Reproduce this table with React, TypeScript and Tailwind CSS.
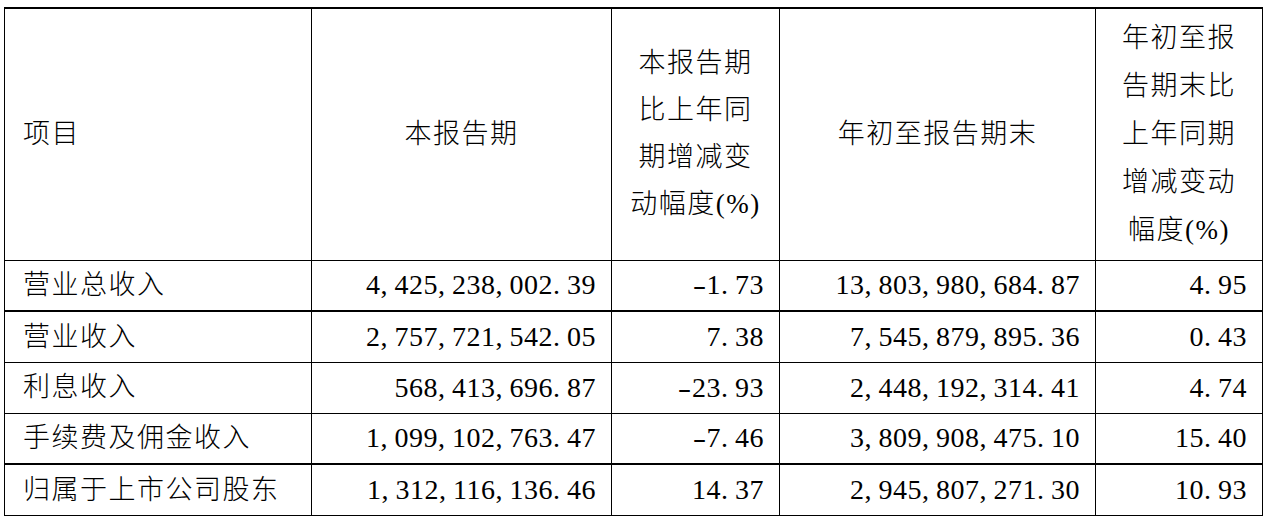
import React from 'react';

type Row = {
  item: string;
  current: string;
  currentChange: string;
  ytd: string;
  ytdChange: string;
  thick: boolean;
};

const rows: Row[] = [
  { item: '营业总收入', current: '4,425,238,002.39', currentChange: '-1.73', ytd: '13,803,980,684.87', ytdChange: '4.95', thick: true },
  { item: '营业收入', current: '2,757,721,542.05', currentChange: '7.38', ytd: '7,545,879,895.36', ytdChange: '0.43', thick: false },
  { item: '利息收入', current: '568,413,696.87', currentChange: '-23.93', ytd: '2,448,192,314.41', ytdChange: '4.74', thick: false },
  { item: '手续费及佣金收入', current: '1,099,102,763.47', currentChange: '-7.46', ytd: '3,809,908,475.10', ytdChange: '15.40', thick: true },
  { item: '归属于上市公司股东', current: '1,312,116,136.46', currentChange: '14.37', ytd: '2,945,807,271.30', ytdChange: '10.93', thick: false },
];

// digits are half-width in the report font, so give punctuation the same cell
const Num = ({ value }: { value: string }) => (
  <>
    {value.split('').map((c, i) =>
      c === ',' || c === '.' ? (
        <span key={i} className="inline-block w-[0.5em] text-left">{c}</span>
      ) : c === '-' ? (
        <span key={i} className="inline-block w-[0.5em] text-center scale-x-[1.45]">{c}</span>
      ) : (
        <React.Fragment key={i}>{c}</React.Fragment>
      )
    )}
  </>
);

const cjk = "tracking-[1.5px]";
const num = "text-[28px] tracking-[0.5px] text-right pr-[15px]";

export default function App() {
  return (
    <div
      className="w-[1270px] h-[525px] bg-white pt-[7px] pl-[4px] text-black text-[27px] font-light"
      style={{ fontFamily: '"Liberation Serif", "Noto Sans CJK SC", serif' }}
    >
      <table className="table-fixed border-collapse w-[1258px]">
        <colgroup>
          <col className="w-[307px]" />
          <col className="w-[300px]" />
          <col className="w-[168px]" />
          <col className="w-[316px]" />
          <col className="w-[167px]" />
        </colgroup>
        <thead>
          <tr className="h-[252px] border-t-2 border-black">
            <th className={`border border-black font-light text-left align-middle pl-[18px] ${cjk}`}>项目</th>
            <th className={`border border-black font-light text-center align-middle ${cjk}`}>本报告期</th>
            <th className={`border border-black font-light text-center align-middle leading-[47px] ${cjk}`}>
              本报告期<br />比上年同<br />期增减变<br />动幅度(%)
            </th>
            <th className={`border border-black font-light text-center align-middle ${cjk}`}>年初至报告期末</th>
            <th className={`border border-black font-light text-center align-middle leading-[48px] ${cjk}`}>
              年初至报<br />告期末比<br />上年同期<br />增减变动<br />幅度(%)
            </th>
          </tr>
        </thead>
        <tbody>
          {rows.map((r) => (
            <tr key={r.item} className={`h-[51px] ${r.thick ? 'border-b-2' : 'border-b'} border-black`}>
              <td className={`border-x border-black pl-[18px] whitespace-nowrap ${cjk}`}>{r.item}</td>
              <td className={`border-x border-black ${num}`}><Num value={r.current} /></td>
              <td className={`border-x border-black ${num}`}><Num value={r.currentChange} /></td>
              <td className={`border-x border-black ${num}`}><Num value={r.ytd} /></td>
              <td className={`border-x border-black ${num}`}><Num value={r.ytdChange} /></td>
            </tr>
          ))}
        </tbody>
      </table>
    </div>
  );
}
